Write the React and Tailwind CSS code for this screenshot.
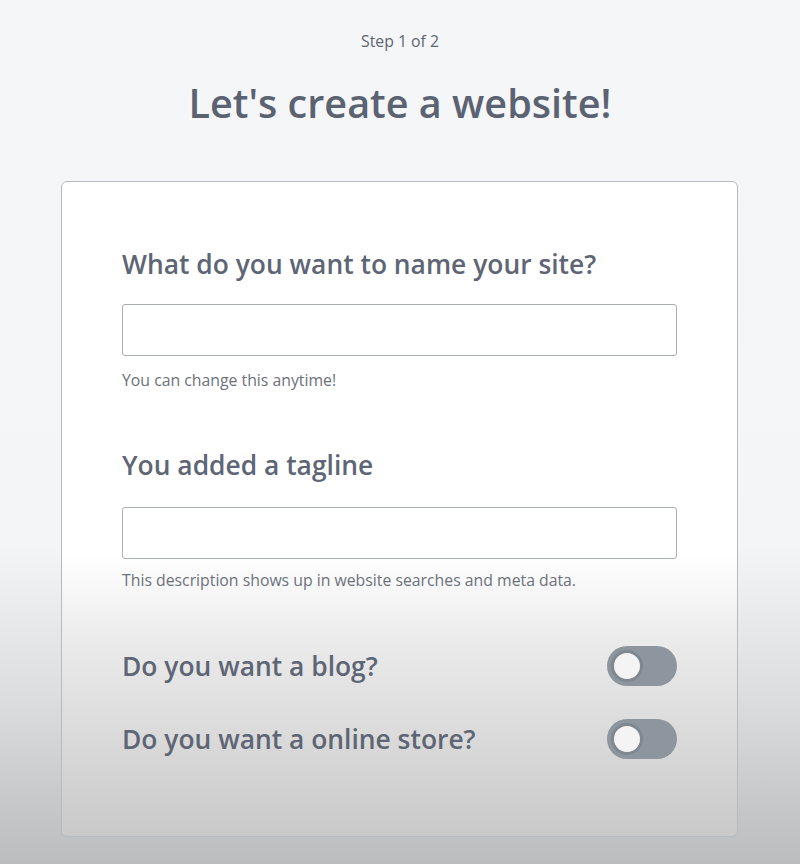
export default function App() {
  const Toggle = () => (
    <div className="w-[70px] h-[40px] rounded-full bg-[#8d959e] flex items-center pl-[4px]">
      <div className="w-[32px] h-[32px] rounded-full bg-[#f4f4f4] border-[3px] border-[#7f8790]" />
    </div>
  );
  return (
    <div
      className="w-[800px] h-[864px] flex flex-col items-center bg-[linear-gradient(to_bottom,#f5f6f8_0%,#f4f5f7_63%,#dddee0_80%,#babcbe_100%)]"
      style={{ fontFamily: '"Open Sans", "Noto Sans", sans-serif' }}
    >
      <div className="mt-[30px] h-[22px] leading-[22px] text-[15.8px] text-[#5f6572] font-medium">Step 1 of 2</div>
      <h1 className="mt-[27px] h-[48px] leading-[48px] text-[39.6px] text-[#5b6272] font-semibold">Let's create a website!</h1>
      <div className="mt-[54px] ml-[-1px] w-[677px] h-[656px] rounded-[6px] border border-[#b5bbc3] bg-[linear-gradient(to_bottom,#ffffff_0%,#ffffff_57%,#ebebeb_70%,#c9c9c9_100%)] pl-[60px] pr-[60px] pt-[66px] flex flex-col">
        <h2 className="h-[32px] leading-[32px] text-[26.4px] text-[#5e6575] font-semibold">What do you want to name your site?</h2>
        <div className="mt-[24px] h-[52px] w-full rounded-[3px] border border-[#a9aeb5] bg-white" />
        <p className="mt-[14px] h-[20px] leading-[20px] text-[15.8px] text-[#6c717b]">You can change this anytime!</p>
        <h2 className="mt-[59px] h-[32px] leading-[32px] text-[26.4px] text-[#5e6575] font-semibold">You added a tagline</h2>
        <div className="mt-[26px] h-[52px] w-full rounded-[3px] border border-[#a9aeb5] bg-white" />
        <p className="mt-[11px] h-[20px] leading-[20px] text-[15.8px] text-[#6c717b]">This description shows up in website searches and meta data.</p>
        <div className="mt-[56px] flex items-center justify-between">
          <span className="text-[26.4px] leading-[32px] text-[#5e6575] font-semibold">Do you want a blog?</span>
          <Toggle />
        </div>
        <div className="mt-[33px] flex items-center justify-between">
          <span className="text-[26.4px] leading-[32px] text-[#5e6575] font-semibold">Do you want a online store?</span>
          <Toggle />
        </div>
      </div>
    </div>
  );
}
